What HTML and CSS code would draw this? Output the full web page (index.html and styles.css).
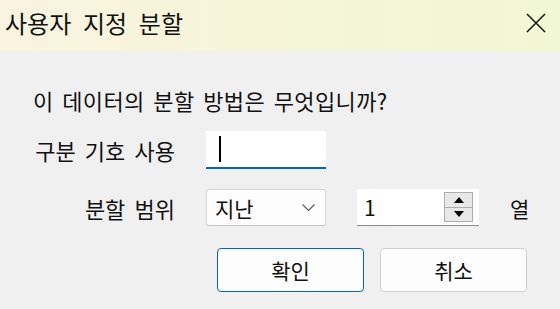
FILE: index.html
```html
<!DOCTYPE html>
<html lang="ko">
<head>
    <meta charset="UTF-8">
    <meta name="viewport" content="width=device-width, initial-scale=1.0">
    <link rel="stylesheet" href="styles.css">
    <title>사용자 지정 분할</title>
</head>
<body>
    <div class="dialog">
        <div class="titlebar">
            <span class="title">사용자 지정 분할</span>
            <svg class="close" width="20" height="20" viewBox="0 0 20 20">
                <path d="M1 1 L19 19 M19 1 L1 19" stroke="#1a1a1a" stroke-width="1.6" fill="none"/>
            </svg>
        </div>

        <div class="content">
            <p class="question">이 데이터의 분할 방법은 무엇입니까?</p>

            <div class="form">
                <div class="label">구분 기호 사용</div>
                <div class="textfield"><span class="caret"></span></div>
                <div></div>
                <div></div>

                <div class="label">분할 범위</div>
                <div class="select">
                    <span>지난</span>
                    <svg width="13" height="8" viewBox="0 0 13 8">
                        <path d="M0.5 0.5 L6.5 6.5 L12.5 0.5" stroke="#5a5a5a" stroke-width="1.1" fill="none"/>
                    </svg>
                </div>
                <div class="spin">
                    <span class="spin-value">1</span>
                    <div class="spin-btns">
                        <div class="spin-btn"><span class="tri-up"></span></div>
                        <div class="spin-btn"><span class="tri-down"></span></div>
                    </div>
                </div>
                <div class="unit">열</div>
            </div>

            <div class="buttons">
                <button class="btn btn-primary">확인</button>
                <button class="btn">취소</button>
            </div>
        </div>
    </div>
</body>
</html>
```

FILE: styles.css
```css
body{
    margin: 0;
    background-color: #f0f0f0;
    font-family: "Noto Sans CJK KR", "Noto Sans", sans-serif;
    color: #111;
}

.dialog{
    width: 560px;
    height: 309px;
}

.titlebar{
    height: 51px;
    display: flex;
    align-items: center;
    justify-content: space-between;
    padding: 0 14px 0 5px;
    background: linear-gradient(90deg, #f9f3df 0%, #f5f5d8 55%, #f2f7d3 100%);
}

.title{
    font-size: 24px;
    word-spacing: 5px;
    margin-top: -6px;
}

.close{
    margin-top: -5px;
}

.content{
    padding: 0 33px;
}

.question{
    margin: 0;
    padding-top: 35px;
    font-size: 22px;
    word-spacing: 2px;
    letter-spacing: 0.4px;
    line-height: 28px;
}

.form{
    display: grid;
    grid-template-columns: 142px 120px 122px 1fr;
    column-gap: 31px;
    row-gap: 20px;
    margin-top: 17px;
    align-items: center;
}

.label{
    text-align: right;
    font-size: 22px;
    word-spacing: 3px;
    white-space: nowrap;
}

.textfield{
    height: 36px;
    background-color: #fff;
    border-bottom: 2px solid #0067c0;
    display: flex;
    align-items: center;
    padding-left: 13px;
}

.caret{
    width: 2px;
    height: 26px;
    background-color: #000;
}

.select{
    height: 35px;
    background-color: #fdfdfd;
    border: 1px solid #d6d6d6;
    border-bottom-color: #c2c2c2;
    border-radius: 3px;
    display: flex;
    align-items: center;
    justify-content: space-between;
    padding: 0 10px 0 8px;
    font-size: 21px;
}

.spin{
    height: 36px;
    background-color: #fff;
    border-bottom: 1px solid #8c8c8c;
    display: flex;
    align-items: center;
    justify-content: space-between;
    padding: 0 6px 0 7px;
    font-size: 21px;
}

.spin-btns{
    width: 29px;
    height: 30px;
    display: flex;
    flex-direction: column;
    border: 1px solid #adadad;
    box-sizing: border-box;
}

.spin-btn{
    flex: 1;
    display: flex;
    align-items: center;
    justify-content: center;
    background-color: #e8e8e8;
}

.spin-btn + .spin-btn{
    border-top: 1px solid #adadad;
}

.tri-up{
    border-left: 5px solid transparent;
    border-right: 5px solid transparent;
    border-bottom: 6px solid #000;
}

.tri-down{
    border-left: 5px solid transparent;
    border-right: 5px solid transparent;
    border-top: 6px solid #000;
}

.unit{
    font-size: 21px;
}

.buttons{
    display: flex;
    justify-content: flex-end;
    gap: 16px;
    margin-top: 22px;
}

.btn{
    width: 147px;
    height: 44px;
    background-color: #fdfdfd;
    border: 1px solid #d0d0d0;
    border-radius: 4px;
    font-family: inherit;
    font-size: 21px;
    word-spacing: 3px;
    color: #111;
    padding: 0;
}

.btn-primary{
    border-color: #0067c0;
}
```
